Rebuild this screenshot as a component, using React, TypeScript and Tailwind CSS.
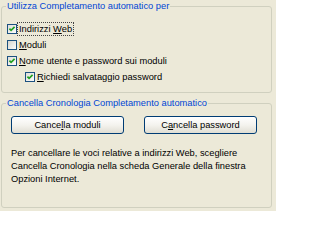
import React from "react";

function CheckBox({ checked }: { checked: boolean }) {
  return (
    <svg width="10" height="10" viewBox="0 0 10 10" className="shrink-0">
      <defs>
        <linearGradient id={checked ? "cbOn" : "cbOff"} x1="0" y1="0" x2="1" y2="1">
          <stop offset="0" stopColor={checked ? "#DCDCD7" : "#D2D2CB"} />
          <stop offset="1" stopColor="#FFFFFF" />
        </linearGradient>
      </defs>
      <rect x="0.5" y="0.5" width="9" height="9" fill={`url(#${checked ? "cbOn" : "cbOff"})`} stroke="#1C5180" />
      {checked && (
        <path d="M2.4 4.6 L4.1 6.4 L7.6 2.9" fill="none" stroke="#21A121" strokeWidth="1.7" />
      )}
    </svg>
  );
}

function Row({
  checked,
  children,
  focused = false,
  indent = false,
}: {
  checked: boolean;
  children: React.ReactNode;
  focused?: boolean;
  indent?: boolean;
}) {
  return (
    <div className={`flex h-[16px] items-center ${indent ? "pl-[18px]" : ""}`}>
      <CheckBox checked={checked} />
      <span
        className={`ml-0 border px-[1px] leading-[12px] ${
          focused ? "border-dotted border-[#444]" : "border-transparent"
        }`}
      >
        {children}
      </span>
    </div>
  );
}

function XpButton({ children }: { children: React.ReactNode }) {
  return (
    <button
      type="button"
      className="flex h-[18px] w-[113px] items-center justify-center rounded-[3px] border border-[#003C74] bg-linear-to-b from-white via-[#F4F3EE] to-[#E0DED3] leading-[12px] text-black"
    >
      {children}
    </button>
  );
}

export default function App() {
  return (
    <div
      className="h-[211px] w-[276px] overflow-hidden bg-[#ECE9D8] text-[9.3px] text-black"
      style={{ fontFamily: '"Liberation Sans", Arial, sans-serif' }}
    >
      <fieldset className="ml-[1px] w-[271px] rounded-[3px] border border-[#D0D0BF] px-[4px] pb-[7px]">
        <legend className="px-[1px] leading-[12px] text-[#0046D5]">
          Utilizza Completamento automatico per
        </legend>
        <div className="pl-[1px] pt-[9px]">
          <Row checked focused>
            Indirizzi <u>W</u>eb
          </Row>
          <Row checked={false}>
            <u>M</u>oduli
          </Row>
          <Row checked>
            <u>N</u>ome utente e password sui moduli
          </Row>
          <Row checked indent>
            <u>R</u>ichiedi salvataggio password
          </Row>
        </div>
      </fieldset>

      <fieldset className="ml-[1px] mt-[4px] w-[271px] rounded-[3px] border border-[#D0D0BF] px-[4px] pb-[21px]">
        <legend className="px-[1px] leading-[12px] text-[#0046D5]">
          Cancella Cronologia Completamento automatico
        </legend>
        <div className="flex gap-[20px] pl-[5px] pt-[7px]">
          <XpButton>
            Cance<u>l</u>la moduli
          </XpButton>
          <XpButton>
            C<u>a</u>ncella password
          </XpButton>
        </div>
        <p className="mt-[13px] pl-[5px] leading-[13px]">
          Per cancellare le voci relative a indirizzi Web, scegliere
          <br />
          Cancella Cronologia nella scheda Generale della finestra
          <br />
          Opzioni Internet.
        </p>
      </fieldset>
    </div>
  );
}
